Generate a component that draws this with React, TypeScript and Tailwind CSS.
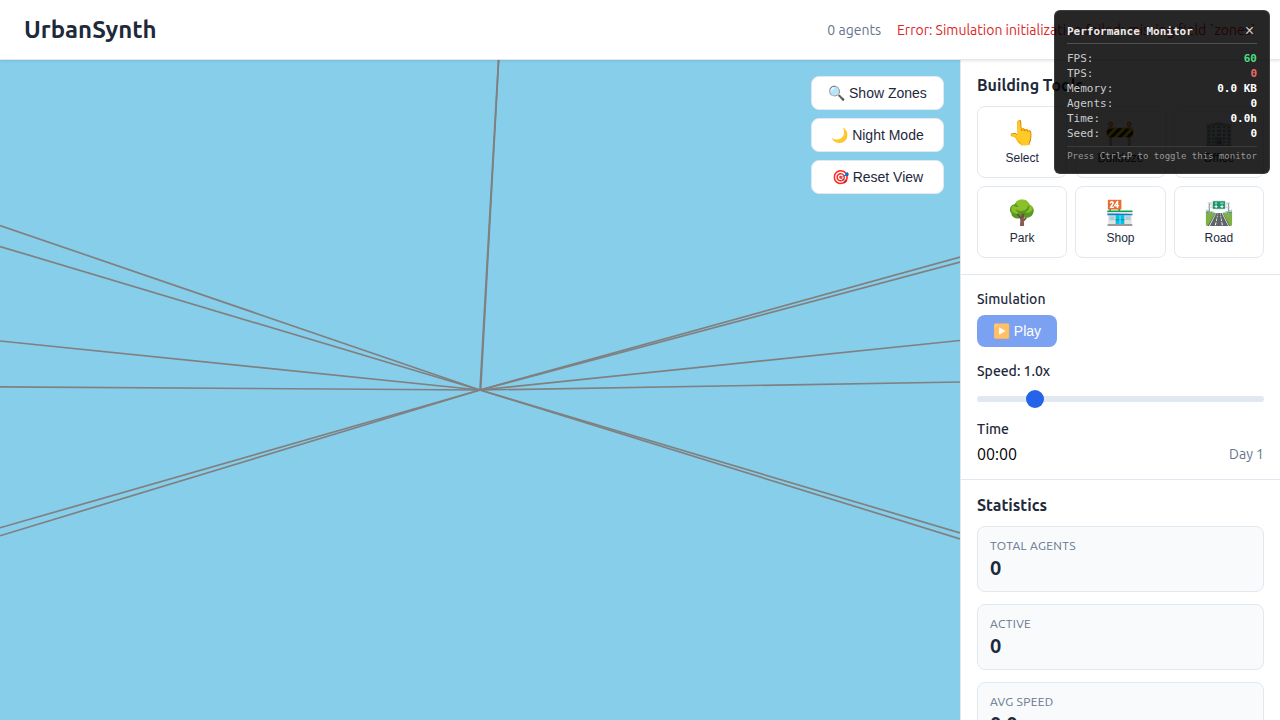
import { ReactNode } from "react";

const tools = [
  { icon: "👆", label: "Select" },
  { icon: "🚧", label: "Bulldoze" },
  { icon: "🏢", label: "Office" },
  { icon: "🌳", label: "Park" },
  { icon: "🏪", label: "Shop" },
  { icon: "🛣️", label: "Road" },
];

const stats = [
  { label: "Total Agents", value: "0" },
  { label: "Active", value: "0" },
  { label: "Avg Speed", value: "0.0" },
];

const metrics = [
  { label: "FPS:", value: "60", color: "text-[#4ade80]" },
  { label: "TPS:", value: "0", color: "text-[#ef6b6b]" },
  { label: "Memory:", value: "0.0 KB", color: "text-white" },
  { label: "Agents:", value: "0", color: "text-white" },
  { label: "Time:", value: "0.0h", color: "text-white" },
  { label: "Seed:", value: "0", color: "text-white" },
];

// Ends of the road segments that meet at the centre of the scene.
const roads = [
  [0, 165.5],
  [0, 186.5],
  [0, 281],
  [0, 326.8],
  [0, 467.8],
  [0, 475.8],
  [498.5, 0],
  [960, 197],
  [960, 202],
  [960, 280.5],
  [960, 322],
  [960, 473],
  [960, 479],
];

function Header() {
  return (
    <header className="relative z-10 flex h-[60px] shrink-0 items-center justify-between border-b border-[#e2e8f0] bg-white px-6 shadow-[0_1px_3px_rgba(0,0,0,0.1)]">
      <h1 className="text-2xl font-semibold text-[#1e293b]">UrbanSynth</h1>
      <div className="flex items-center gap-4 text-sm">
        <span className="text-[#64748b]">0 agents</span>
        <span className="whitespace-nowrap text-[#dc2626]">
          Error: Simulation initialization failed: missing field `zones`
        </span>
      </div>
    </header>
  );
}

function CanvasButton({ children }: { children: ReactNode }) {
  return (
    <button className="h-[34px] w-[133px] rounded-lg border border-[#e2e8f0] bg-white font-['Liberation_Sans',sans-serif] text-sm leading-4 text-[#1e293b]">
      {children}
    </button>
  );
}

function Viewport() {
  return (
    <main className="relative w-[960px] shrink-0 overflow-hidden bg-[#87ceeb]">
      <svg className="block" width="960" height="660" viewBox="0 0 960 660">
        {roads.map(([x, y]) => (
          <line key={`${x}-${y}`} x1="480" y1="330" x2={x} y2={y} stroke="#808080" strokeWidth="1.7" />
        ))}
        <line x1="480.7" y1="330" x2="498.7" y2="0" stroke="#808080" strokeWidth="1.6" />
      </svg>
      <div className="absolute top-4 right-4 flex flex-col gap-2">
        <CanvasButton>🔍 Show Zones</CanvasButton>
        <CanvasButton>🌙 Night Mode</CanvasButton>
        <CanvasButton>🎯 Reset View</CanvasButton>
      </div>
    </main>
  );
}

function Sidebar() {
  return (
    <aside className="min-w-0 flex-1 overflow-hidden border-l border-[#e2e8f0] bg-white">
      <section className="border-b border-[#e2e8f0] p-4">
        <h2 className="mb-3 text-base leading-[18px] font-semibold text-[#1e293b]">Building Tools</h2>
        <div className="grid grid-cols-3 gap-2">
          {tools.map((tool) => (
            <button
              key={tool.label}
              className="flex h-[72px] flex-col items-center justify-center gap-1 rounded-lg border border-[#e2e8f0] bg-white font-['Liberation_Sans',sans-serif] text-xs leading-[14px] text-[#1e293b]"
            >
              <span className="text-2xl leading-7">{tool.icon}</span>
              <span>{tool.label}</span>
            </button>
          ))}
        </div>
      </section>

      <section className="flex flex-col gap-4 border-b border-[#e2e8f0] p-4">
        <div>
          <h3 className="mb-2 text-sm leading-4 font-medium text-[#1e293b]">Simulation</h3>
          <button className="block h-8 w-20 rounded-lg bg-[#2563eb] font-['Liberation_Sans',sans-serif] text-sm leading-4 text-white opacity-60">
            ▶️ Play
          </button>
        </div>
        <div>
          <h3 className="mb-[17px] text-sm leading-4 font-medium text-[#1e293b]">Speed: 1.0x</h3>
          <input
            type="range"
            min="0.1"
            max="5"
            step="0.1"
            defaultValue="1"
            className="mb-[3px] block h-1.5 w-full appearance-none rounded-[3px] bg-[#e2e8f0] [&::-webkit-slider-thumb]:size-[18px] [&::-webkit-slider-thumb]:appearance-none [&::-webkit-slider-thumb]:rounded-full [&::-webkit-slider-thumb]:bg-[#2563eb]"
          />
        </div>
        <div>
          <h3 className="mb-2 text-sm leading-4 font-medium text-[#1e293b]">Time</h3>
          <div className="flex h-[18px] items-center justify-between">
            <span className="text-base leading-[18px] text-black">00:00</span>
            <span className="text-sm leading-4 text-[#64748b]">Day 1</span>
          </div>
        </div>
      </section>

      <section className="p-4">
        <h2 className="mb-3 text-base leading-[18px] font-semibold text-[#1e293b]">Statistics</h2>
        <div className="flex flex-col gap-3">
          {stats.map((stat) => (
            <div key={stat.label} className="h-[66px] rounded-lg border border-[#e2e8f0] bg-[#f8fafc] p-3">
              <div className="mb-1 text-xs leading-[13px] tracking-[0.3px] text-[#64748b] uppercase">{stat.label}</div>
              <div className="text-xl leading-[23px] font-bold text-[#1e293b]">{stat.value}</div>
            </div>
          ))}
        </div>
      </section>
    </aside>
  );
}

function PerformanceMonitor() {
  return (
    <div className="absolute top-2.5 right-2.5 z-20 h-[164px] w-[216px] rounded-md border border-white/10 bg-black/85 p-3 font-['DejaVu_Sans_Mono',monospace] text-[11px] leading-[15px] text-white">
      <div className="mb-[7px] flex h-[21px] items-center justify-between border-b border-white/20 pb-1">
        <span className="font-bold text-[#ebebeb]">Performance Monitor</span>
        <button className="pr-[3px] pl-1 font-['Liberation_Sans',sans-serif] text-base leading-4 text-[#cccccc]">×</button>
      </div>
      {metrics.map((metric) => (
        <div key={metric.label} className="flex justify-between">
          <span className="text-[#cccccc]">{metric.label}</span>
          <span className={`font-bold ${metric.color}`}>{metric.value}</span>
        </div>
      ))}
      <div className="mt-[5px] border-t border-white/10 pt-1 text-center text-[9px] leading-[11px] whitespace-nowrap text-[#999999]">
        Press Ctrl+P to toggle this monitor
      </div>
    </div>
  );
}

export default function App() {
  return (
    <div className="relative flex h-[720px] w-[1280px] flex-col overflow-hidden font-[Ubuntu,system-ui,'Noto_Sans',sans-serif]">
      <Header />
      <div className="flex min-h-0 flex-1">
        <Viewport />
        <Sidebar />
      </div>
      <PerformanceMonitor />
    </div>
  );
}
